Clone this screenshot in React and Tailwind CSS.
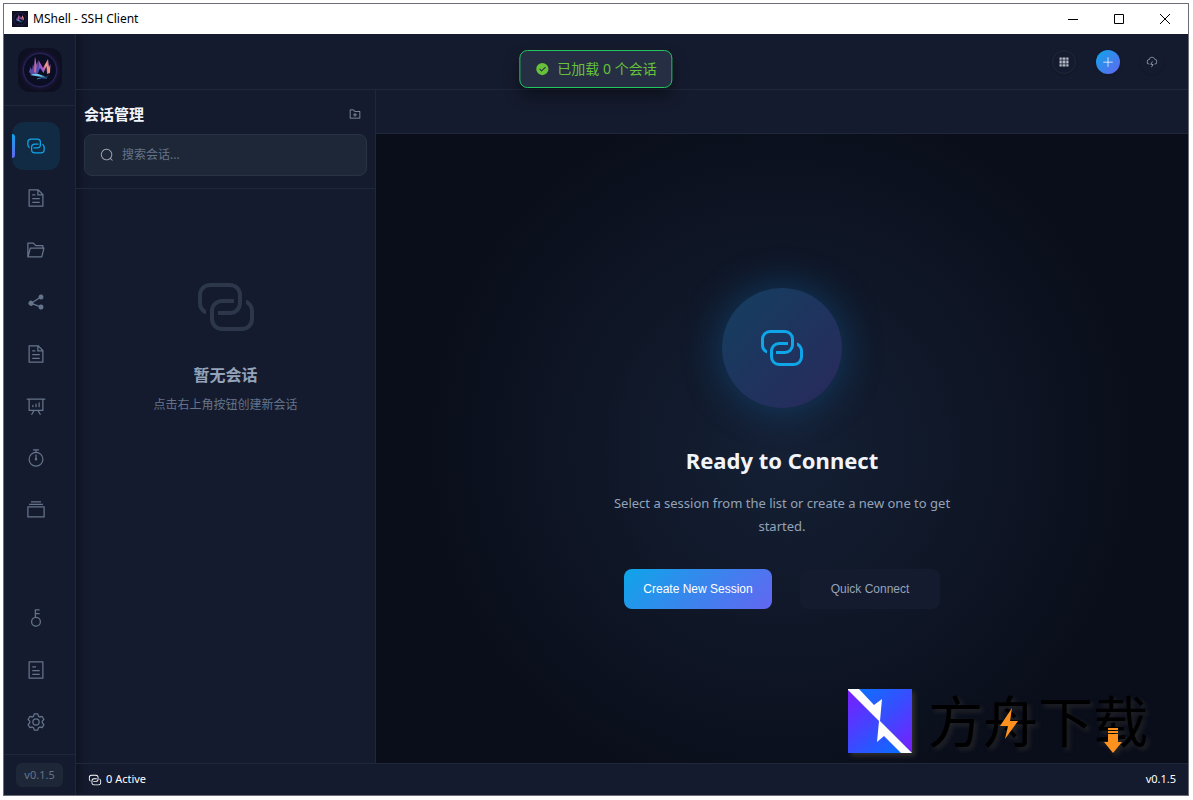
import React, { useState } from 'react';
import { twMerge } from 'tailwind-merge';

const ICONS = {
  connection: [
    'M640 384v64H448a128 128 0 0 0-128 128v128a128 128 0 0 0 128 128h320a128 128 0 0 0 128-128V576a128 128 0 0 0-64-110.848V394.88c74.56 26.368 128 97.472 128 181.056v128a192 192 0 0 1-192 192H448a192 192 0 0 1-192-192V576a192 192 0 0 1 192-192z',
    'M384 640v-64h192a128 128 0 0 0 128-128V320a128 128 0 0 0-128-128H256a128 128 0 0 0-128 128v128a128 128 0 0 0 64 110.848v70.272A192.064 192.064 0 0 1 64 448V320a192 192 0 0 1 192-192h320a192 192 0 0 1 192 192v128a192 192 0 0 1-192 192z',
  ],
  document: [
    'M832 384H576V128H192v768h640zm-26.496-64L640 154.496V320zM160 64h480l256 256v608a32 32 0 0 1-32 32H160a32 32 0 0 1-32-32V96a32 32 0 0 1 32-32m160 448h384v64H320zm0-192h160v64H320zm0 384h384v64H320z',
  ],
  folderOpened: [
    'M878.08 448H241.92l-96 384h636.16zM832 384v-64H485.76L357.504 192H128v448l57.92-231.744A32 32 0 0 1 216.96 384zm-24.96 512H96a32 32 0 0 1-32-32V160a32 32 0 0 1 32-32h287.872l128.384 128H864a32 32 0 0 1 32 32v96h23.04a32 32 0 0 1 31.04 39.744l-112 448A32 32 0 0 1 807.04 896',
  ],
  share: [
    'm679.872 348.8-301.76 188.608a127.808 127.808 0 0 1 5.12 52.16l279.936 104.96a128 128 0 1 1-22.464 59.904l-279.872-104.96a128 128 0 1 1-16.64-166.272l301.696-188.608a128 128 0 1 1 33.92 54.272z',
  ],
  dataAnalysis: [
    'm665.216 768 110.848 192h-73.856L591.36 768H433.024L322.176 960H248.32l110.848-192H160a32 32 0 0 1-32-32V192H64a32 32 0 0 1 0-64h896a32 32 0 1 1 0 64h-64v544a32 32 0 0 1-32 32zM832 192H192v512h640zM352 448a32 32 0 0 1 32 32v64a32 32 0 0 1-64 0v-64a32 32 0 0 1 32-32m160-64a32 32 0 0 1 32 32v128a32 32 0 0 1-64 0V416a32 32 0 0 1 32-32m160-64a32 32 0 0 1 32 32v192a32 32 0 1 1-64 0V352a32 32 0 0 1 32-32',
  ],
  timer: [
    'M512 896a320 320 0 1 0 0-640 320 320 0 0 0 0 640m0 64a384 384 0 1 1 0-768 384 384 0 0 1 0 768',
    'M512 320a32 32 0 0 1 32 32l-.512 224a32 32 0 1 1-64 0L480 352a32 32 0 0 1 32-32',
    'M448 576a64 64 0 1 0 128 0 64 64 0 1 0-128 0m96-448v128h-64V128h-96a32 32 0 0 1 0-64h256a32 32 0 1 1 0 64z',
  ],
  files: [
    'M128 384v448h768V384zm-32-64h832a32 32 0 0 1 32 32v512a32 32 0 0 1-32 32H96a32 32 0 0 1-32-32V352a32 32 0 0 1 32-32m64-128h704v64H160zm96-128h512v64H256z',
  ],
  key: [
    'M448 456.064V96a32 32 0 0 1 32-32.064L672 64a32 32 0 0 1 0 64H512v128h160a32 32 0 0 1 0 64H512v128a256 256 0 1 1-64 8.064M512 896a192 192 0 1 0 0-384 192 192 0 0 0 0 384',
  ],
  tickets: [
    'M192 128v768h640V128zm-32-64h704a32 32 0 0 1 32 32v832a32 32 0 0 1-32 32H160a32 32 0 0 1-32-32V96a32 32 0 0 1 32-32m160 448h384v64H320zm0-192h192v64H320zm0 384h384v64H320z',
  ],
  setting: [
    'M600.704 64a32 32 0 0 1 30.464 22.208l35.2 109.376c14.784 7.232 28.928 15.36 42.432 24.512l112.384-24.192a32 32 0 0 1 34.432 15.36L944.32 364.8a32 32 0 0 1-4.032 37.504l-77.12 85.12a357.12 357.12 0 0 1 0 49.024l77.12 85.248a32 32 0 0 1 4.032 37.504l-88.704 153.6a32 32 0 0 1-34.432 15.296L708.8 803.904c-13.44 9.088-27.648 17.28-42.368 24.512l-35.264 109.376A32 32 0 0 1 600.704 960H423.296a32 32 0 0 1-30.464-22.208L357.696 828.48a351.616 351.616 0 0 1-42.56-24.64l-112.32 24.256a32 32 0 0 1-34.432-15.36L79.68 659.2a32 32 0 0 1 4.032-37.504l77.12-85.248a357.12 357.12 0 0 1 0-48.896l-77.12-85.248A32 32 0 0 1 79.68 364.8l88.704-153.6a32 32 0 0 1 34.432-15.296l112.32 24.256c13.568-9.152 27.776-17.408 42.56-24.64l35.2-109.312A32 32 0 0 1 423.232 64H600.64zm-23.424 64H446.72l-36.352 113.088-24.512 11.968a294.113 294.113 0 0 0-34.816 20.096l-22.656 15.36-116.224-25.088-65.28 113.152 79.68 88.192-1.92 27.136a293.12 293.12 0 0 0 0 40.192l1.92 27.136-79.808 88.192 65.344 113.152 116.224-25.024 22.656 15.296a294.113 294.113 0 0 0 34.816 20.096l24.512 11.968L446.72 896h130.688l36.48-113.152 24.448-11.904a288.282 288.282 0 0 0 34.752-20.096l22.592-15.296 116.288 25.024 65.28-113.152-79.744-88.192 1.92-27.136a293.12 293.12 0 0 0 0-40.256l-1.92-27.136 79.808-88.128-65.344-113.152-116.288 24.96-22.592-15.232a287.616 287.616 0 0 0-34.752-20.096l-24.448-11.904L577.344 128zM512 320a192 192 0 1 1 0 384 192 192 0 0 1 0-384m0 64a128 128 0 1 0 0 256 128 128 0 0 0 0-256',
  ],
  search: [
    'm795.904 750.72 124.992 124.928a32 32 0 0 1-45.248 45.248L750.656 795.904a416 416 0 1 1 45.248-45.248zM480 832a352 352 0 1 0 0-704 352 352 0 0 0 0 704',
  ],
  success: [
    'M512 64a448 448 0 1 1 0 896 448 448 0 0 1 0-896m-55.808 536.384-99.52-99.584a38.4 38.4 0 1 0-54.336 54.336l126.72 126.72a38.272 38.272 0 0 0 54.336 0l262.4-262.464a38.4 38.4 0 1 0-54.272-54.336z',
  ],
  plus: [
    'M480 480V128a32 32 0 0 1 64 0v352h352a32 32 0 1 1 0 64H544v352a32 32 0 1 1-64 0V544H128a32 32 0 0 1 0-64z',
  ],
  folderAdd: [
    'M128 192v640h768V320H485.76L357.504 192zm-32-64h287.872l128.384 128H928a32 32 0 0 1 32 32v576a32 32 0 0 1-32 32H96a32 32 0 0 1-32-32V160a32 32 0 0 1 32-32m384 416V416h64v128h128v64H544v128h-64V608H352v-64z',
  ],
  grid: [
    'M640 384v256H384V384zm64 0h192v256H704zm-64 512H384V704h256zm64 0V704h192v192zm-64-768v192H384V128zm64 0h192v192H704zM320 384v256H128V384zm0 512H128V704h192zm0-768v192H128V128z',
  ],
  lightning: [
    'M288 671.36v64.128A239.808 239.808 0 0 1 63.744 496.192a240.32 240.32 0 0 1 199.488-236.8 256.128 256.128 0 0 1 487.872-30.976A256.064 256.064 0 0 1 736 734.016v-64.768a192 192 0 0 0 3.328-377.92l-35.2-6.592-12.8-33.408a192.064 192.064 0 0 0-365.952 23.232l-9.92 40.896-41.472 7.04a176.32 176.32 0 0 0-146.24 173.568c0 91.968 70.464 167.36 160.256 175.232z',
    'M416 736a32 32 0 0 1-27.776-47.872l128-224a32 32 0 1 1 55.552 31.744L471.168 672H608a32 32 0 0 1 27.776 47.872l-128 224a32 32 0 1 1-55.68-31.744L552.96 736z',
  ],
};

const MAIN_NAV = [
  { id: 'sessions', icon: 'connection', label: 'Sessions' },
  { id: 'logs', icon: 'document', label: 'Logs' },
  { id: 'files', icon: 'folderOpened', label: 'Files' },
  { id: 'forwarding', icon: 'share', label: 'Port forwarding' },
  { id: 'snippets', icon: 'document', label: 'Snippets' },
  { id: 'monitor', icon: 'dataAnalysis', label: 'Monitor' },
  { id: 'tasks', icon: 'timer', label: 'Tasks' },
  { id: 'workspaces', icon: 'files', label: 'Workspaces' },
];

const BOTTOM_NAV = [
  { id: 'keys', icon: 'key', label: 'Keys' },
  { id: 'audit', icon: 'tickets', label: 'Audit log' },
  { id: 'settings', icon: 'setting', label: 'Settings' },
];

function Icon({ name, className }) {
  return (
    <svg viewBox="0 0 1024 1024" fill="currentColor" aria-hidden="true" className={twMerge('shrink-0', className)}>
      {ICONS[name].map((d, i) => <path key={i} d={d} />)}
    </svg>
  );
}

function AppLogo({ id, className }) {
  return (
    <svg viewBox="0 0 44 44" aria-hidden="true" className={twMerge('shrink-0', className)}>
      <defs>
        <linearGradient id={`${id}-m`} x1="0" y1="0.8" x2="1" y2="0.2">
          <stop offset="0" stopColor="#3b5bdb" />
          <stop offset="0.35" stopColor="#a855c8" />
          <stop offset="0.65" stopColor="#fb9a78" />
          <stop offset="1" stopColor="#9b5cf0" />
        </linearGradient>
        <radialGradient id={`${id}-bg`}>
          <stop offset="0.6" stopColor="#0d0d24" />
          <stop offset="0.76" stopColor="#2c2560" />
          <stop offset="0.86" stopColor="#15132f" />
          <stop offset="1" stopColor="#0f0f22" />
        </radialGradient>
      </defs>
      <rect width="44" height="44" fill="#0f0f22" />
      <circle cx="22" cy="22" r="21" fill={`url(#${id}-bg)`} />
      <circle cx="22" cy="22" r="16.5" fill="#0b0e22" stroke="#2f2a66" strokeWidth="0.8" />
      {/* skyline shards on the left, the M stroke on the right */}
      <path d="M11 24 12.500 19 14 22 15 16 16 19 17 9 18.500 17 20 13 20 25 17 27 13 26Z" fill="#5a4aa8" />
      <path d="M17 9 18.500 17 18 25 16 24Z" fill="#c76a9a" />
      <path d="M20 25 20.500 12 25 20 30 11 31 19 32.500 16 32 25 29 26 28.500 18 25.500 25 22 20Z" fill={`url(#${id}-m)`} />
      <path d="M12 27Q18 24.500 23 27T31 27.500Q26 29.500 21 28.500T12 27" fill="#6fc6ee" />
      <path d="M19 31Q23 29 29 30" fill="none" stroke="#3b82c4" />
    </svg>
  );
}

function NavButton({ item, active, onClick }) {
  return (
    <button
      type="button"
      title={item.label}
      aria-label={item.label}
      onClick={onClick}
      className={twMerge(
        'relative flex size-12 items-center justify-center rounded-xl text-[#64748b]',
        active && 'bg-[#122b45] text-[#0ea5e9]'
      )}
    >
      {active && (
        <span className="absolute left-0 top-3 h-6 w-[3px] rounded-r bg-linear-to-b/srgb from-[#0ea5e9] to-[#6366f1]" />
      )}
      <Icon name={item.icon} className="size-5" />
    </button>
  );
}

function TitleBar() {
  return (
    <div className="flex h-[30px] shrink-0 items-center bg-white pl-2 text-black">
      <AppLogo id="title-logo" className="size-4" />
      <span className="ml-[5px] flex-1 text-xs">MShell - SSH Client</span>
      <button type="button" aria-label="Minimize" className="flex h-full w-[46px] items-center justify-center">
        <svg viewBox="0 0 10 10" className="size-[10px]" shapeRendering="crispEdges"><path d="M0 5.500H10" stroke="#000" /></svg>
      </button>
      <button type="button" aria-label="Maximize" className="flex h-full w-[46px] items-center justify-center">
        <svg viewBox="0 0 10 10" className="size-[10px]"><path d="M.5.5H9.500V9.500H.5Z" fill="none" stroke="#000" /></svg>
      </button>
      <button type="button" aria-label="Close" className="flex h-full w-[46px] items-center justify-center">
        <svg viewBox="0 0 10 10" className="size-[10px]"><path d="M0 0 10 10M10 0 0 10" stroke="#000" /></svg>
      </button>
    </div>
  );
}

function Sidebar({ current, onChange }) {
  return (
    <aside className="flex w-[72px] shrink-0 flex-col border-r border-[#1f283a] bg-[#151b2e] shadow-[4px_0_8px_rgba(0,0,0,0.3)]">
      <div className="flex h-[72px] items-center justify-center border-b border-[#1f283a]">
        <AppLogo id="side-logo" className="size-11 rounded-xl" />
      </div>
      <nav className="flex flex-1 flex-col justify-between px-2 pb-2 pt-4">
        <div className="flex flex-col gap-1">
          {MAIN_NAV.map((item) => (
            <NavButton key={item.id} item={item} active={current === item.id} onClick={() => onChange(item.id)} />
          ))}
        </div>
        <div className="flex flex-col gap-1">
          {BOTTOM_NAV.map((item) => (
            <NavButton key={item.id} item={item} active={current === item.id} onClick={() => onChange(item.id)} />
          ))}
        </div>
      </nav>
      <div className="flex h-[41px] items-center justify-center border-t border-[#1f283a]">
        <span className="rounded-md bg-[#1e2737] px-2 text-[11px] leading-6 text-[#64748b]">v0.1.5</span>
      </div>
    </aside>
  );
}

function Header() {
  return (
    <header className="flex h-14 shrink-0 items-center justify-end gap-5 border-b border-[#1f283a] px-6">
      <button type="button" aria-label="Layout" className="flex size-6 items-center justify-center rounded-full border border-[#20283a] text-[#b4b9c6] shadow">
        <Icon name="grid" className="size-3" />
      </button>
      <button type="button" aria-label="New session" className="flex size-6 items-center justify-center rounded-full bg-linear-to-br/srgb from-[#0ea5e9] to-[#6366f1] text-white shadow">
        <Icon name="plus" className="size-3" />
      </button>
      <button type="button" aria-label="Quick connect" className="flex size-6 items-center justify-center rounded-full text-[#94a3b8] shadow">
        <Icon name="lightning" className="size-3" />
      </button>
    </header>
  );
}

function SessionPanel() {
  const [query, setQuery] = useState('');

  return (
    <section className="flex w-[300px] shrink-0 flex-col border-r border-[#1f283a]">
      <div className="flex flex-col border-b border-[#1f283a] px-2 pb-3 pt-3">
        <div className="flex h-6 items-center justify-between">
          <h2 className="text-[15px] font-bold text-[#f1f5f9]">会话管理</h2>
          <button type="button" aria-label="新建分组" className="flex w-6 items-center justify-center text-[#94a3b8]">
            <Icon name="folderAdd" className="size-3" />
          </button>
        </div>
        <label className="mt-2 flex h-[42px] items-center gap-2 rounded-lg border border-[#283446] bg-[#1e2737] px-[15px] text-[#a3a8b2]">
          <Icon name="search" className="size-[14px]" />
          <input
            type="text"
            aria-label="搜索会话"
            placeholder="搜索会话..."
            value={query}
            onChange={(e) => setQuery(e.target.value)}
            className="min-w-0 flex-1 bg-transparent text-xs text-[#f1f5f9] outline-none placeholder:text-[#64748b]"
          />
        </label>
      </div>

      {/* Empty state */}
      <div className="flex flex-1 flex-col items-center pt-[86px] text-center">
        <Icon name="connection" className="size-16 text-[#2c374b]" />
        <h3 className="mt-6 text-base font-bold text-[#94a3b8]">暂无会话</h3>
        <p className="mt-2 text-xs leading-5 text-[#64748b]">点击右上角按钮创建新会话</p>
      </div>
    </section>
  );
}

function Welcome() {
  return (
    <div className="flex flex-1 flex-col items-center justify-center bg-[radial-gradient(circle_at_center,#152035_0%,#0a0e1a_70%)] px-6">
      <div className="flex size-[120px] items-center justify-center rounded-full bg-linear-135/srgb from-[#143f60] to-[#29295c] text-[#0ea5e9] shadow-[0_0_40px_rgba(14,116,190,0.4)]">
        <Icon name="connection" className="size-12" />
      </div>
      <h1 className="mt-8 text-[22px] leading-10 font-bold text-[#f1f5f9]">Ready to Connect</h1>
      <p className="mt-3 max-w-[360px] text-center text-[13px] leading-[23px] text-[#94a3b8]">
        Select a session from the list or create a new one to get started.
      </p>
      <div className="mt-[31px] flex gap-7 font-['Liberation_Sans',Arial,sans-serif] text-xs font-medium">
        <button type="button" className="h-10 w-[148px] rounded-lg bg-linear-135/srgb from-[#0ea5e9] to-[#6366f1] text-white">
          Create New Session
        </button>
        <button type="button" className="h-10 w-[140px] rounded-lg bg-[#151b2e] text-[#94a3b8]">
          Quick Connect
        </button>
      </div>
    </div>
  );
}

function Watermark() {
  return (
    <div className="pointer-events-none absolute bottom-[10px] right-10 flex items-center gap-4">
      <svg viewBox="0 0 64 64" className="size-16 drop-shadow-[3px_3px_2px_rgba(60,56,50,0.7)]" aria-hidden="true">
        <defs>
          <linearGradient id="ark-lower" x1="0" y1="0" x2="0.8" y2="1">
            <stop offset="0" stopColor="#7c1cff" />
            <stop offset="1" stopColor="#0a6cff" />
          </linearGradient>
          <linearGradient id="ark-upper" x1="0.1" y1="0" x2="1" y2="1">
            <stop offset="0" stopColor="#0a74ff" />
            <stop offset="0.5" stopColor="#3a4bff" />
            <stop offset="1" stopColor="#7c1cff" />
          </linearGradient>
        </defs>
        <path d="M0 0 64 64H0Z" fill="url(#ark-lower)" />
        <path d="M0 0H64V64Z" fill="url(#ark-upper)" />
        <path d="M0 0H11L26 16 34 10 32 32 64 64H53L36 47 29 53 31 32 0 1Z" fill="#fff" />
      </svg>
      <div className="relative text-[55px] leading-16 text-black drop-shadow-[3px_3px_2px_rgba(50,48,46,0.6)]">
        方舟下载
        <svg viewBox="0 0 220 64" className="absolute inset-0 size-full" aria-hidden="true">
          <path d="M84 19 72 37H80L77 50 90 32H82Z" fill="#ff911e" />
          <path d="M180 39H190V41H180ZM180 42H190V44H180ZM180 45H190V53H194L185 64 176 53H180Z" fill="#ff911e" />
        </svg>
      </div>
    </div>
  );
}

function Toast({ children }) {
  return (
    <div role="status" className="absolute left-1/2 top-[46px] z-20 flex h-[38px] -translate-x-1/2 items-center gap-2 rounded-lg border border-[#22c55e] bg-[#252e43] px-[15px] text-sm whitespace-nowrap text-[#67c23a] shadow-[0_8px_16px_rgba(0,0,0,0.4)]">
      <Icon name="success" className="size-[14px]" />
      {children}
    </div>
  );
}

export default function App() {
  const [view, setView] = useState('sessions');

  return (
    <div className="flex min-h-screen bg-white pb-1 pl-[3px] pr-1 pt-[3px] font-['Noto_Sans','Noto_Sans_CJK_SC',sans-serif]">
      <div className="relative flex flex-1 flex-col border border-[#6b6e74] bg-[#151b2e]">
        <TitleBar />
        <div className="flex flex-1 overflow-hidden">
          <Sidebar current={view} onChange={setView} />
          <div className="flex min-w-0 flex-1 flex-col">
            <Header />
            <div className="flex flex-1">
              <SessionPanel />
              <main className="relative flex min-w-0 flex-1 flex-col">
                <div className="h-11 shrink-0 border-b border-[#1f283a]" />
                <Welcome />
                <Watermark />
              </main>
            </div>
            <footer className="flex h-8 shrink-0 items-center justify-between border-t border-[#1f283a] px-3 text-[11px] text-white">
              <span className="flex items-center gap-1">
                <Icon name="connection" className="size-[14px]" />
                0 Active
              </span>
              <span>v0.1.5</span>
            </footer>
          </div>
        </div>
        <Toast>已加载 0 个会话</Toast>
      </div>
    </div>
  );
}
